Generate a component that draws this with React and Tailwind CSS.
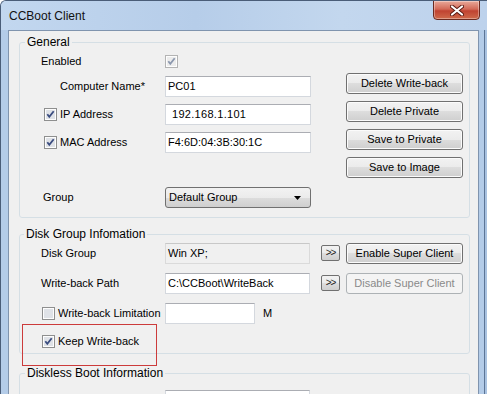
import React from 'react';

const CheckBox = ({ checked, disabled }) => (
  <svg width="13" height="13" viewBox="0 0 13 13" className="shrink-0">
    <rect x="0.5" y="0.5" width="12" height="12" fill="#fdfdfd" stroke={disabled ? '#b3b3b3' : '#8e8f8f'} />
    <rect x="2" y="2" width="9" height="9" fill={disabled ? '#ececec' : '#dfe2e7'} />
    {checked && (
      <path
        d="M3.3 6.3 L5.3 8.9 L9.7 3.2"
        fill="none"
        stroke={disabled ? '#8c98ae' : '#3b4d80'}
        strokeWidth="1.8"
      />
    )}
  </svg>
);

const Btn = ({ children, disabled }) =>
  disabled ? (
    <div className="w-[117px] h-[21px] shrink-0 flex items-center justify-center rounded-[3px] border border-[#adb2b5] bg-[#f4f4f4] text-[#8a8a8a]">
      {children}
    </div>
  ) : (
    <div className="w-[117px] h-[21px] shrink-0 flex items-center justify-center rounded-[3px] border border-[#707070] bg-[linear-gradient(#f2f2f2_0%,#ebebeb_50%,#dddddd_50%,#cfcfcf_100%)] shadow-[inset_0_0_0_1px_#fbfbfb] text-black">
      {children}
    </div>
  );

const SmallBtn = ({ label = true }) => (
  <div className="w-[19px] h-[16px] shrink-0 flex items-center justify-center rounded-[2px] border border-[#707070] bg-[linear-gradient(#f2f2f2_0%,#ebebeb_50%,#dddddd_50%,#cfcfcf_100%)] text-[10px] leading-none tracking-[-1px] text-[#222]">
    {label ? '>>' : null}
  </div>
);

const Field = ({ children, className }) => (
  <div
    className={`h-[21px] shrink-0 flex items-center px-[2px] border border-[#d4d8de] border-t-[#abadb3] whitespace-nowrap ${className}`}
  >
    {children}
  </div>
);

export default function App() {
  return (
    <div className="w-[487px] h-[394px] overflow-hidden relative bg-[#b8cfea] font-['Liberation_Sans',Arial,sans-serif] text-[11px] text-black border-l border-t border-[#4a5d78] rounded-tl-[6px]">
      {/* Title bar */}
      <div className="h-[29px] flex items-center pl-[8px] bg-[linear-gradient(90deg,#c2d7ef_0%,#b6cde9_40%,#c3d7ee_70%,#bdd2ec_100%)]">
        <span className="text-[12px] text-[#111] pt-[1px]">CCBoot Client</span>
      </div>

      {/* Close button */}
      <div className="absolute left-[432px] top-[-1px] w-[47px] h-[20px] rounded-b-[4px] border border-[#6b2a20] bg-[linear-gradient(#e9a99a_0%,#d36a58_45%,#c04331_55%,#cf6a4b_100%)] flex items-center justify-center shadow-[inset_0_0_0_1px_rgba(255,255,255,0.35)]">
        <svg width="14" height="11" viewBox="0 0 14 11">
          <path d="M2 1.5 L12 9.5 M12 1.5 L2 9.5" stroke="#5a1a12" strokeWidth="4" strokeLinecap="round" />
          <path d="M2 1.5 L12 9.5 M12 1.5 L2 9.5" stroke="#ffffff" strokeWidth="2.2" strokeLinecap="round" />
        </svg>
      </div>

      <div className="flex">
        <div className="w-[7px] bg-[#b4cce8]" />
        {/* Client area */}
        <div className="w-[471px] h-[365px] bg-[#f0f0f0] border border-[#8094ae] pt-[4px]">
          {/* General */}
          <fieldset className="ml-[10px] w-[451px] border border-[#d5dfe5] rounded-[3px] pb-[9px]">
            <legend className="ml-[5px] px-[2px] leading-[14px] text-[12px]">General</legend>
            <div className="flex">
              <div className="w-[291px] flex flex-col">
                <div className="h-[21px] mt-[2px] flex items-center">
                  <span className="w-[145px] pl-[21px]">Enabled</span>
                  <CheckBox checked disabled />
                </div>
                <div className="h-[21px] mt-[4px] flex items-center">
                  <span className="w-[145px] pl-[40px]">Computer Name*</span>
                  <Field className="w-[146px] bg-white">PC01</Field>
                </div>
                <div className="h-[21px] mt-[7px] flex items-center">
                  <div className="w-[145px] pl-[24px] flex items-center gap-[3px]">
                    <CheckBox checked />
                    <span>IP Address</span>
                  </div>
                  <Field className="w-[146px] bg-white pl-[6px] tracking-[0.3px]">192.168.1.101</Field>
                </div>
                <div className="h-[21px] mt-[7px] flex items-center">
                  <div className="w-[145px] pl-[24px] flex items-center gap-[3px]">
                    <CheckBox checked />
                    <span>MAC Address</span>
                  </div>
                  <Field className="w-[146px] bg-white">F4:6D:04:3B:30:1C</Field>
                </div>
                <div className="h-[21px] mt-[34px] flex items-center">
                  <span className="w-[145px] pl-[23px]">Group</span>
                  <div className="w-[146px] h-[21px] flex items-center justify-between pl-[3px] pr-[9px] rounded-[3px] border border-[#707070] bg-[linear-gradient(#f2f2f2_0%,#ebebeb_50%,#dddddd_50%,#cfcfcf_100%)]">
                    <span>Default Group</span>
                    <svg width="7" height="4" viewBox="0 0 7 4">
                      <path d="M0 0 H7 L3.5 4 Z" fill="#000" />
                    </svg>
                  </div>
                </div>
              </div>
              <div className="ml-[35px] mt-[24px] flex flex-col gap-[7px]">
                <Btn>Delete Write-back</Btn>
                <Btn>Delete Private</Btn>
                <Btn>Save to Private</Btn>
                <Btn>Save to Image</Btn>
              </div>
            </div>
          </fieldset>

          {/* Disk Group Infomation */}
          <fieldset className="ml-[10px] mt-[9px] w-[451px] border border-[#d5dfe5] rounded-[3px] pb-[1px]">
            <legend className="ml-[4px] px-[2px] leading-[14px] text-[12px]">Disk Group Infomation</legend>
            <div className="h-[22px] mt-[1px] flex items-center">
              <span className="w-[145px] pl-[21px]">Disk Group</span>
              <Field className="w-[145px] bg-[#f0f0f0] border-[#dadada] border-t-[#c8c8c8]">Win XP;</Field>
              <div className="ml-[11px]">
                <SmallBtn />
              </div>
              <div className="ml-[6px]">
                <Btn>Enable Super Client</Btn>
              </div>
            </div>
            <div className="h-[22px] mt-[8px] flex items-center">
              <span className="w-[145px] pl-[21px]">Write-back Path</span>
              <Field className="w-[145px] bg-white">C:\CCBoot\WriteBack</Field>
              <div className="ml-[11px]">
                <SmallBtn />
              </div>
              <div className="ml-[6px]">
                <Btn disabled>Disable Super Client</Btn>
              </div>
            </div>
            <div className="h-[22px] mt-[8px] flex items-center">
              <div className="w-[145px] pl-[22px] flex items-center gap-[3px]">
                <CheckBox />
                <span>Write-back Limitation</span>
              </div>
              <Field className="w-[90px] bg-white" />
              <span className="ml-[8px]">M</span>
            </div>
            <div className="h-[22px] mt-[6px] flex items-center">
              <div className="w-[145px] pl-[22px] flex items-center gap-[3px]">
                <CheckBox checked />
                <span>Keep Write-back</span>
              </div>
            </div>
          </fieldset>

          {/* Diskless Boot Information */}
          <fieldset className="ml-[10px] mt-[12px] w-[451px] border border-[#d5dfe5] rounded-[3px] pb-[4px]">
            <legend className="ml-[5px] px-[2px] leading-[14px] text-[12px]">Diskless Boot Information</legend>
            <div className="h-[21px] mt-[10px] flex items-center">
              <span className="w-[145px]" />
              <Field className="w-[145px] bg-white" />
              <div className="ml-[12px] mt-[2px]">
                <SmallBtn label={false} />
              </div>
            </div>
          </fieldset>
        </div>
        <div className="w-[8px] flex">
          <div className="w-[5px] bg-[#b4cce8]" />
          <div className="w-[1px] bg-[#5d7596]" />
          <div className="w-[2px] bg-[#a9c2e0]" />
        </div>
      </div>

      {/* Annotation */}
      <div className="absolute left-[21px] top-[323px] w-[135px] h-[42px] border border-[#cc3b3b]" />
    </div>
  );
}
